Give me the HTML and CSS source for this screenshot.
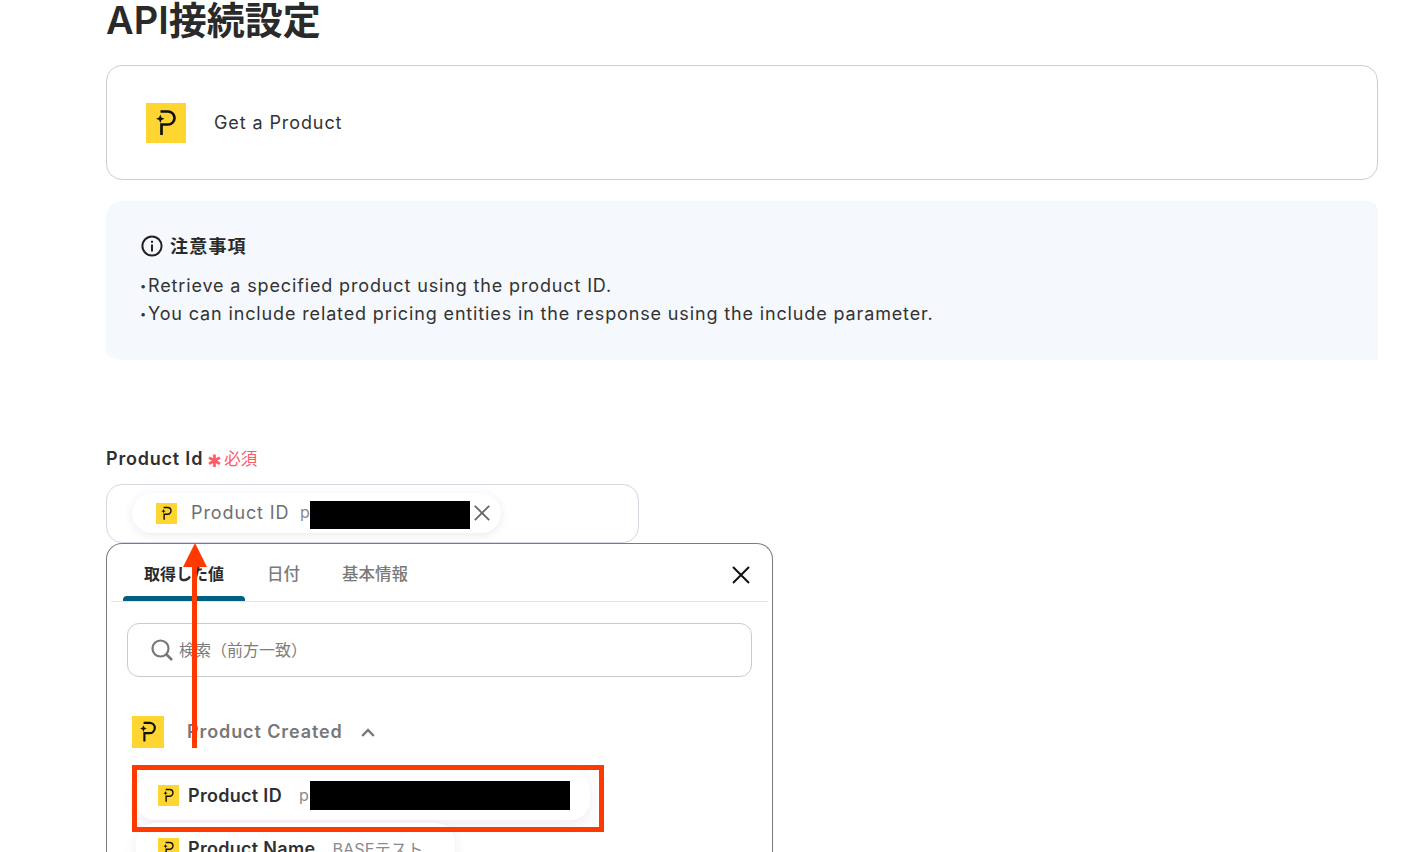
FILE: index.html
```html
<!DOCTYPE html>
<html lang="ja">
<head>
<meta charset="utf-8">
<title>API接続設定</title>
<link rel="stylesheet" href="styles.css">
</head>
<body>
<svg class="defs" width="0" height="0" aria-hidden="true">
  <symbol id="logo" viewBox="0 0 40 40">
    <rect width="40" height="40" fill="#ffd531"/>
    <path d="M14.500 8.500H22a6.500 6.500 0 0 1 0 13h-6.500V32" fill="none" stroke="#111" stroke-width="2.700"/>
    <path d="M14.300 11.500l1.200 3 3 1.200-3 1.200-1.200 3-1.200-3-3-1.200 3-1.200z" fill="#111"/>
  </symbol>
  <symbol id="cross" viewBox="0 0 20 20">
    <path d="M2 2l16 16M18 2L2 18" fill="none" stroke="currentColor" stroke-width="2"/>
  </symbol>
</svg>
<main class="page">
  <h1 class="title">API接続設定</h1>
  <section class="action-card">
    <svg class="logo-lg"><use href="#logo"/></svg>
    <span class="action-name">Get a Product</span>
  </section>
  <section class="notes">
    <h2 class="notes-title">
      <svg class="info" viewBox="0 0 22 22"><circle cx="11" cy="11" r="9.600" fill="none" stroke="#222" stroke-width="2"/><rect x="10" y="9.500" width="2" height="7" fill="#222"/><rect x="10" y="5.800" width="2" height="2" fill="#222"/></svg>
      注意事項
    </h2>
    <p class="note-line"><span class="dot">•</span>Retrieve a specified product using the product ID.</p>
    <p class="note-line"><span class="dot">•</span>You can include related pricing entities in the response using the include parameter.</p>
  </section>
  <div class="label-row">
    <span class="label">Product Id</span>
    <span class="star">✱</span>
    <span class="required">必須</span>
  </div>
  <div class="input">
    <div class="chip">
      <svg class="logo-sm"><use href="#logo"/></svg>
      <span class="chip-name">Product ID</span>
      <span class="chip-value">p</span>
      <span class="redact redact-short"></span>
      <svg class="chip-x"><use href="#cross"/></svg>
    </div>
  </div>
  <section class="popup">
    <div class="tabs">
      <span class="tab tab-active">取得した値</span>
      <span class="tab tab-date">日付</span>
      <span class="tab tab-basic">基本情報</span>
      <svg class="close"><use href="#cross"/></svg>
    </div>
    <div class="search">
      <svg class="search-icon" viewBox="0 0 22 22"><circle cx="9.500" cy="9.500" r="8" fill="none" stroke="#777" stroke-width="2.200"/><path d="M15.500 15.500L21 21" stroke="#777" stroke-width="2.600" fill="none"/></svg>
      <span class="search-text">検索（前方一致）</span>
    </div>
    <div class="group">
      <svg class="logo-md"><use href="#logo"/></svg>
      <span class="group-name">Product Created</span>
      <svg class="chevron" viewBox="0 0 14 9"><path d="M1.200 8L7 2l5.800 6" fill="none" stroke="#777" stroke-width="2.400"/></svg>
    </div>
    <div class="row row-id">
      <svg class="logo-sm"><use href="#logo"/></svg>
      <span class="row-name">Product ID</span>
      <span class="row-value">p</span>
      <span class="redact redact-long"></span>
    </div>
    <div class="row row-next">
      <svg class="logo-sm"><use href="#logo"/></svg>
      <span class="row-name">Product Name</span>
      <span class="row-value row-jp">BASEテスト</span>
    </div>
  </section>
</main>
<div class="highlight"></div>
<svg class="arrow" viewBox="0 0 24 205"><path d="M12 0L24 24H14V205H9V24H0z" fill="#ff3a00"/></svg>
</body>
</html>
```
FILE: styles.css
```css
* { box-sizing: border-box; }
html, body { margin: 0; height: 852px; overflow: hidden; background: #fff; }
body { position: relative; font-family: Inter, "Noto Sans CJK JP", sans-serif; color: #2a2a2e; }
.defs { position: absolute; }
.page { padding: 0 36px 0 106px; }

.title { margin: 0; height: 65px; font-size: 38px; line-height: 41px; font-weight: 600; color: #2a2a2a; }

.action-card { height: 115px; border: 1px solid #cfcdd1; border-radius: 16px; display: flex; align-items: center; padding-left: 39px; }
.logo-lg { width: 40px; height: 40px; flex: none; }
.action-name { margin-left: 28px; font-size: 18px; letter-spacing: 0.9px; color: #333; }

.notes { margin-top: 21px; height: 159px; background: #f5f8fc; border-radius: 16px 10px 0 20px / 16px 10px 0 8px; padding: 31px 34px 0; }
.notes-title { margin: 0 0 14px; display: flex; align-items: center; gap: 7px; height: 26px; font-size: 18px; font-weight: 700; letter-spacing: 1.200px; color: #2a2a2a; }
.info { width: 22px; height: 22px; flex: none; margin-left: 1px; margin-top: 2px; }
.note-line { margin: 0; font-size: 18px; line-height: 28px; letter-spacing: 0.860px; color: #333; }
.dot { display: inline-block; width: 8px; font-size: 11px; vertical-align: 2px; }

.label-row { margin-top: 85px; height: 28px; display: flex; align-items: center; transform: translateY(-1px); }
.label { font-size: 18px; font-weight: 600; letter-spacing: 0.800px; color: #2f2f33; }
.star { margin-left: 4px; width: 14px; font-family: "DejaVu Sans", sans-serif; font-size: 17px; line-height: 17px; margin-top: 6px; color: #ff5a68; }
.required { margin-left: 3px; font-size: 16.500px; color: #ff5a68; }

.input { margin-top: 11px; width: 533px; height: 59px; border: 1px solid #d3d8e2; border-radius: 16px; padding: 8px 0 0 25px; }
.chip { width: 369px; height: 40px; border-radius: 20px; background: #fff; box-shadow: 0 2px 10px rgba(60, 60, 90, 0.1); display: flex; align-items: center; padding-left: 24px; }
.logo-sm { width: 21px; height: 21px; flex: none; }
.chip-name { margin-left: 14px; margin-bottom: 2px; width: 109px; font-size: 18px; letter-spacing: 0.9px; color: #6f6f73; white-space: nowrap; }
.chip-value, .row-value { font-size: 16px; color: #8a8a8e; }
.chip-value { width: 10px; margin-bottom: 2px; }
.redact { display: block; background: #000; flex: none; }
.redact-short { width: 160px; height: 28px; margin-top: 4px; }
.chip-x { width: 18px; height: 18px; margin-left: 3px; color: #666; flex: none; }

.popup { position: relative; width: 667px; height: 340px; border: 1px solid #7b7b7b; border-bottom: 0; border-radius: 16px 16px 0 0; background: #fff; padding: 0 4px; }
.tabs { height: 58px; border-bottom: 1px solid #e3e5e8; position: relative; display: flex; align-items: flex-start; }
.tab { font-size: 16.500px; line-height: 24px; margin-top: 18px; font-weight: 500; color: #7a7a7a; }
.tab-active { margin-left: 33px; font-size: 16px; font-weight: 700; color: #2a2a2a; position: relative; }
.tab-active::after { content: ""; position: absolute; left: -21px; right: -21px; top: 34px; height: 5px; border-radius: 4px 4px 0 0; background: #00607f; }
.tab-date { margin-left: 43px; }
.tab-basic { margin-left: 42px; }
.close { position: absolute; top: 21px; right: 17px; width: 20px; height: 20px; color: #111; }

.search { margin: 21px 16px 0; height: 54px; border: 1px solid #cbcbcd; border-radius: 12px; display: flex; align-items: center; padding-left: 23px; }
.search-icon { width: 22px; height: 22px; flex: none; }
.search-text { margin-left: 6px; margin-bottom: 2px; font-size: 16px; color: #7d7d7d; }

.group { margin: 38px 0 0 21px; height: 33px; display: flex; align-items: center; }
.logo-md { width: 32px; height: 32px; flex: none; }
.group-name { margin-left: 23px; font-size: 18px; font-weight: 600; letter-spacing: 0.900px; color: #787878; }
.chevron { width: 14px; height: 9px; margin-left: 18px; margin-top: 2px; flex: none; }

.row { margin-left: 25px; display: flex; align-items: center; background: #fff; border-radius: 20px; box-shadow: 0 4px 14px rgba(60, 60, 90, 0.09); padding-left: 22px; }
.row-id { margin-top: 22px; width: 454px; height: 50px; }
.row-next { margin-top: 3px; width: 319px; height: 50px; }
.row-name { margin-left: 9px; font-size: 18px; font-weight: 600; letter-spacing: 0.300px; color: #2f2f33; white-space: nowrap; }
.row-id .row-value { margin-left: 17px; width: 11px; }
.row-jp { margin-left: 17px; font-size: 16.300px; }
.redact-long { width: 260px; height: 29px; }

.highlight { position: absolute; left: 132px; top: 765px; width: 472px; height: 67px; border: 5px solid #ff3a00; }
.arrow { position: absolute; left: 183px; top: 543px; width: 24px; height: 205px; }
```
